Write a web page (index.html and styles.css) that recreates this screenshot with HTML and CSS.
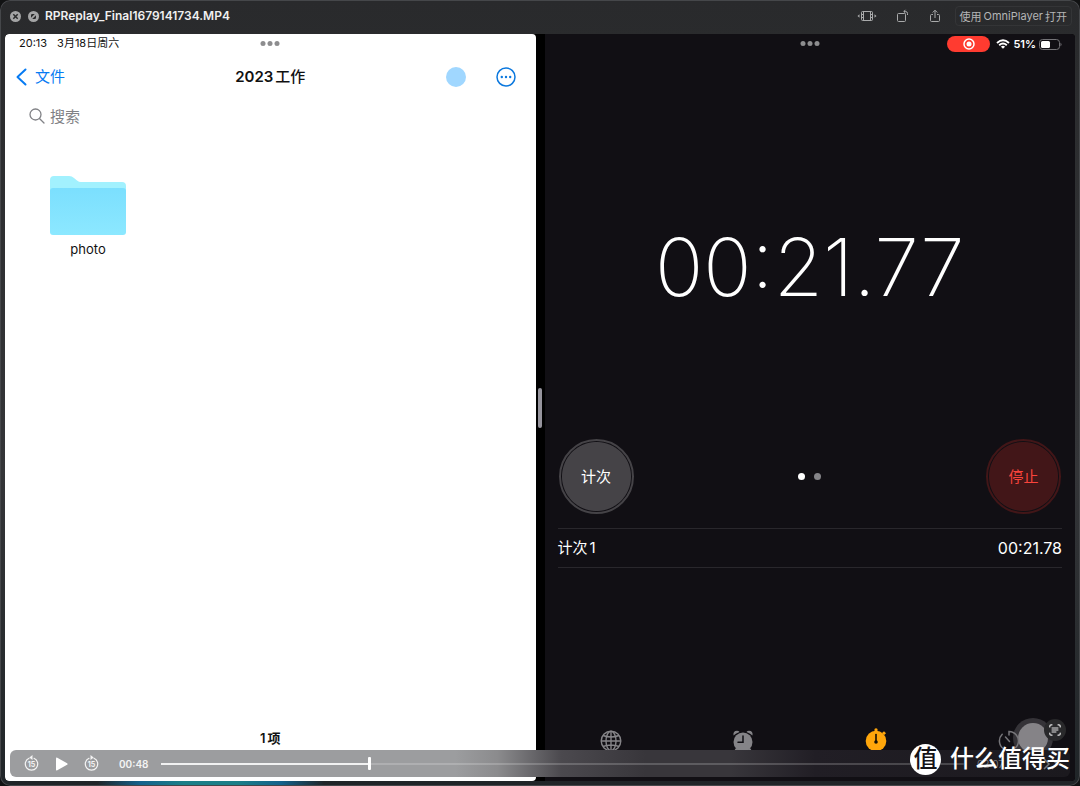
FILE: index.html
```html
<!DOCTYPE html>
<html lang="zh-CN">
<head>
<meta charset="utf-8">
<meta name="viewport" content="width=device-width, initial-scale=1">
<title>RPReplay_Final1679141734.MP4</title>
<link rel="stylesheet" href="styles.css">
</head>
<body>
<div class="window">
  <header class="titlebar">
    <button class="icon-button" aria-label="关闭">
      <svg width="11" height="11" viewBox="0 0 11 11"><circle cx="5.5" cy="5.5" r="5.5" fill="#a3a4a5"/><path d="M3.300 3.300l4.400 4.400M7.700 3.300L3.300 7.700" stroke="#292a2b" stroke-width="1.500"/></svg>
    </button>
    <button class="icon-button" aria-label="全屏">
      <svg width="11" height="11" viewBox="0 0 11 11"><circle cx="5.5" cy="5.5" r="5.5" fill="#a3a4a5"/><path d="M3 6.800V4.200Q3 3 4.200 3h2.600zM8 4.200v2.600Q8 8 6.800 8H4.200z" fill="#292a2b"/></svg>
    </button>
    <h1 class="file-name">RPReplay_Final1679141734.MP4</h1>
    <div class="title-actions">
      <button class="icon-button" aria-label="修剪">
        <svg width="20" height="12" viewBox="0 0 20 12" fill="none" stroke="#a9aaab"><rect x="4.500" y="1.500" width="11" height="9" rx="1"/><path d="M6.500 1.500v9M13.500 1.500v9"/><path d="M4.800 4.500h1.500M4.800 7.500h1.500M13.700 4.500h1.500M13.700 7.500h1.500"/><path d="M2.500 4.200v3.600L.5 6zM17.500 4.200v3.600l2-1.800z" fill="#a9aaab" stroke="none"/></svg>
      </button>
      <button class="icon-button" aria-label="旋转">
        <svg width="14" height="14" viewBox="0 0 14 14" fill="none" stroke="#a9aaab"><rect x="1.500" y="4.500" width="8" height="8" rx="1"/><path d="M8 2.500h1.500q2 0 2 2V6M9.500.8L7.800 2.500l1.700 1.700"/></svg>
      </button>
      <button class="icon-button" aria-label="共享">
        <svg width="12" height="14" viewBox="0 0 12 14" fill="none" stroke="#a9aaab"><path d="M4 5.500H2.500q-1 0-1 1v5q0 1 1 1h7q1 0 1-1v-5q0-1-1-1H8M6 9V1.500M3.700 3.500L6 1.200l2.300 2.300"/></svg>
      </button>
      <button class="open-button">使用<span>OmniPlayer</span>打开</button>
    </div>
  </header>

  <main class="screen">
    <section class="files">
      <div class="status-bar">
        <span>20:13</span><span>3月18日周六</span>
      </div>
      <button class="grab" aria-label="多任务"><i></i><i></i><i></i></button>
      <nav class="files-nav">
        <a class="back" href="#files">
          <svg width="11" height="18" viewBox="0 0 11 18" fill="none" stroke="#077bf3" stroke-width="2" stroke-linecap="round" stroke-linejoin="round"><path d="M9.500 1.500L1.500 9l8 7.500"/></svg><span>文件</span></a>
        <h2>2023<span>工作</span></h2>
        <div class="nav-tools">
          <span class="touch-dot"></span>
          <button class="icon-button" aria-label="更多">
            <svg width="20" height="20" viewBox="0 0 20 20"><circle cx="10" cy="10" r="9" fill="none" stroke="#0b78de" stroke-width="1.500"/><g fill="#0b78de"><circle cx="5.800" cy="10" r="1.200"/><circle cx="10" cy="10" r="1.200"/><circle cx="14.200" cy="10" r="1.200"/></g></svg>
          </button>
        </div>
      </nav>
      <label class="search">
        <svg width="16" height="16" viewBox="0 0 16 16" fill="none" stroke="#818286" stroke-width="1.300" stroke-linecap="round"><circle cx="6.500" cy="6.500" r="5.500"/><path d="M10.700 10.700l4.300 4.300"/></svg>
        <input type="search" placeholder="搜索" aria-label="搜索">
      </label>
      <div class="folder-grid">
        <a class="folder" href="#photo">
          <svg width="76" height="60" viewBox="0 0 76 60"><defs><linearGradient id="front" x1="0" y1="0" x2="0" y2="1"><stop offset="0" stop-color="#7bdffe"/><stop offset="1" stop-color="#8ce8ff"/></linearGradient></defs><path d="M0 4q0-4 4-4h15q3 0 5 2l3 2.500q2 1.500 4 1.500h41q4 0 4 4v14H0z" fill="#a2f1fe"/><path d="M0 15q0-3 3-3h70q3 0 3 3v41q0 3-3 3H3q-3 0-3-3z" fill="url(#front)"/></svg>
          <span>photo</span>
        </a>
      </div>
      <p class="item-count">1<span>项</span></p>
    </section>

    <div class="divider"><span class="divider-handle"></span></div>

    <section class="clock">
      <button class="grab" aria-label="多任务"><i></i><i></i><i></i></button>
      <div class="clock-status">
        <span class="record"><svg width="12" height="12" viewBox="0 0 12 12"><circle cx="6" cy="6" r="5" fill="none" stroke="#fff" stroke-width="1.500"/><circle cx="6" cy="6" r="2.500" fill="#fff"/></svg></span>
        <svg width="14" height="10" viewBox="0 0 14 10" fill="none" stroke="#fff" stroke-width="1.900"><path d="M1 4q6-5.600 12 0M3.200 6.300q3.800-3.500 7.600 0"/><path d="M7 9.800L4.900 7.700q2.100-1.700 4.200 0z" fill="#fff" stroke="none"/></svg>
        <span>51%</span>
        <svg width="23" height="11" viewBox="0 0 23 11"><rect x=".5" y=".5" width="20" height="10" rx="3" fill="none" stroke="#747377"/><rect x="2" y="2" width="9" height="7" rx="1.500" fill="#fff"/><path d="M21.500 3.500q2 2 0 4z" fill="#747377"/></svg>
      </div>
      <div class="time">00:21.77</div>
      <div class="controls">
        <button class="round lap">计次</button>
        <div class="pages"><i></i><i></i></div>
        <button class="round stop">停止</button>
      </div>
      <ul class="laps">
        <li><span>计次<span class="lap-number">1</span></span><span class="lap-time">00:21.78</span></li>
      </ul>
      <div class="assistive"><span></span></div>
      <nav class="tabs">
        <a href="#world" aria-label="世界时钟"><svg width="22" height="22" viewBox="0 0 22 22" fill="none" stroke="#858488" stroke-width="1.400"><circle cx="11" cy="11" r="9.800"/><ellipse cx="11" cy="11" rx="5" ry="9.800"/><path d="M11 1v20M1 11h20M3 5.500q8 3 16 0M3 16.500q8-3 16 0"/></svg></a>
        <a href="#alarm" aria-label="闹钟"><svg width="22" height="22" viewBox="0 0 22 22" fill="#858488"><circle cx="11" cy="12" r="9.500"/><path d="M1.500 5.500Q.8 1 5 .8q1.800 0 2.500 1.200Q4 3 1.500 5.500zM20.500 5.500q.7-4.500-3.500-4.700-1.800 0-2.500 1.200 3.500 1 6 3.500zM4 18l-2 3 1 1 4-2zM18 18l2 3-1 1-4-2z"/><path d="M11 6v6.300H6" fill="none" stroke="#110f14" stroke-width="1.500" stroke-linecap="round"/></svg></a>
        <a href="#stopwatch" aria-label="秒表"><svg width="22" height="24" viewBox="0 0 22 24"><g fill="#ffa60b"><circle cx="11" cy="13" r="10.300"/><path d="M9.500 1q1.500-1.500 3 0v3h-3zM17 5l2-1.700 2 2L19.200 7z"/></g><path d="M11 6.500V14" stroke="#171005" stroke-width="1.600" stroke-linecap="round"/><circle cx="11" cy="14" r="1.800" fill="#171005"/></svg></a>
        <a href="#timer" aria-label="计时器"><svg width="22" height="22" viewBox="0 0 22 22" fill="none" stroke="#77767a" stroke-width="1.500" stroke-linecap="round"><path d="M11 5V1.500a9.500 9.500 0 1 1-6.800 2.800M7.500 7l4 4.500"/></svg></a>
      </nav>
      <button class="scan" aria-label="识别文本"><svg width="12" height="12" viewBox="0 0 12 12" fill="none" stroke="#e5e5e6" stroke-width="1.200" stroke-linecap="round"><path d="M.8 3V2q0-1.200 1.200-1.200h1M9 .8h1q1.200 0 1.200 1.200v1M11.200 9v1q0 1.200-1.200 1.200H9M3 11.200H2Q.8 11.200.8 10V9"/><path d="M3 4h6M3 6h6M3 8h4" stroke-width="1"/></svg></button>
    </section>

    <div class="player">
      <button class="icon-button" aria-label="后退15秒"><svg width="15" height="17" viewBox="0 0 15 17"><path d="M5 3.300a6.200 6.200 0 1 0 5 0" fill="none" stroke="#f4f4f4" stroke-width="1.200" stroke-linecap="round"/><path d="M8.500 0v5L5.300 2.500z" fill="#f4f4f4"/><text x="7.500" y="11.500" class="skip">15</text></svg></button>
      <button class="icon-button" aria-label="播放"><svg width="13" height="14" viewBox="0 0 13 14"><path d="M1 1.500Q1 0 2.300.7l9.800 5.500q1 .8 0 1.600l-9.800 5.500Q1 14 1 12.500z" fill="#fff"/></svg></button>
      <button class="icon-button" aria-label="前进15秒"><svg width="15" height="17" viewBox="0 0 15 17"><path d="M5 3.300a6.200 6.200 0 1 0 5 0" fill="none" stroke="#f4f4f4" stroke-width="1.200" stroke-linecap="round"/><path d="M6.500 0v5l3.200-2.500z" fill="#f4f4f4"/><text x="7.500" y="11.500" class="skip">15</text></svg></button>
      <span class="elapsed">00:48</span>
      <input class="seek" type="range" min="0" max="186" value="48" aria-label="播放进度">
      <span class="remaining">02:07</span>
      <button class="icon-button more" aria-label="更多选项"><svg width="18" height="12" viewBox="0 0 18 12" fill="none" stroke="#77767a" stroke-width="1.500"><path d="M2 1l5 5-5 5M10 1l5 5-5 5"/></svg></button>
    </div>

    <div class="watermark"><span class="seal">值</span><span>什么值得买</span></div>
  </main>
</div>
</body>
</html>
```

FILE: styles.css
```css
* { box-sizing: border-box; }

body {
  margin: 0;
  background: #111213;
  font-family: Inter, "Noto Sans CJK SC", sans-serif;
}

h1, h2, p, ul { margin: 0; padding: 0; }

button {
  padding: 0;
  border: 0;
  background: none;
  color: inherit;
  font: inherit;
}

a { color: inherit; text-decoration: none; }

svg { display: block; }

i { display: block; border-radius: 50%; }

.window {
  display: flex;
  flex-direction: column;
  min-height: 100vh;
  padding: 0 5px 5px;
  border-radius: 10px;
  background:
    linear-gradient(90deg, transparent 9%, #14628c 13%, #1b7f88 17%, #1b7f88 22%, #14628c 26%, transparent 30%) bottom / 100% 5px no-repeat,
    linear-gradient(#292a2c, #343538 60%, #202528);
  box-shadow: inset 0 0 0 1px #45474a;
}

.titlebar {
  display: flex;
  align-items: center;
  gap: 7px;
  height: 34px;
  padding: 0 3px 2px 5px;
}

.file-name {
  margin-left: -1px;
  color: #f0f0f0;
  font-size: 12px;
  font-weight: 600;
  line-height: 16px;
}

.title-actions {
  display: flex;
  align-items: center;
  gap: 19px;
  margin-left: auto;
}

.open-button {
  display: flex;
  align-items: center;
  gap: 2px;
  height: 20px;
  margin-left: -5px;
  padding: 0 4px;
  border: 1px solid #343537;
  border-radius: 4px;
  color: #b4b5b6;
  font-size: 11px;
}

.screen {
  position: relative;
  display: grid;
  grid-template-columns: 1fr 9px 1fr;
  flex: 1;
  overflow: hidden;
  border-radius: 4px;
  background: #000;
}

.files {
  position: relative;
  display: flex;
  flex-direction: column;
  border-radius: 4px;
  background: #fff;
  color: #111;
}

.status-bar {
  display: flex;
  gap: 10px;
  height: 20px;
  padding-left: 14px;
  font-size: 11px;
  line-height: 19px;
}

.grab {
  position: absolute;
  top: 7px;
  left: 50%;
  display: flex;
  gap: 2px;
  transform: translateX(-50%);
}

.grab i { width: 5px; height: 5px; background: #8d8d8f; }

.files-nav {
  display: grid;
  grid-template-columns: 1fr auto 1fr;
  align-items: center;
  height: 46px;
  padding: 0 11px;
}

.back {
  display: flex;
  align-items: center;
  gap: 8px;
  color: #077bf3;
  font-size: 15px;
  line-height: 20px;
}

.files-nav h2 {
  display: flex;
  align-items: baseline;
  gap: 2px;
  font-size: 15px;
  font-weight: 600;
  line-height: 20px;
}

.files-nav h2 span { font-weight: 500; }

.nav-tools {
  display: flex;
  align-items: center;
  justify-content: flex-end;
  gap: 30px;
  padding-right: 9px;
}

.touch-dot {
  width: 20px;
  height: 20px;
  border-radius: 50%;
  background: #a0d7ff;
}

.search {
  display: flex;
  align-items: center;
  gap: 5px;
  height: 32px;
  padding-left: 24px;
}

.search input {
  flex: 1;
  min-width: 0;
  padding: 0;
  border: 0;
  outline: 0;
  background: none;
  font: 15px Inter, "Noto Sans CJK SC", sans-serif;
}

.search input::placeholder { color: #818286; }

.folder-grid { display: flex; flex: 1; align-items: flex-start; padding: 44px 45px; }

.folder {
  display: flex;
  flex-direction: column;
  align-items: center;
  gap: 4px;
  font-size: 13px;
  line-height: 18px;
}

.item-count {
  display: flex;
  justify-content: center;
  gap: 2px;
  padding-bottom: 33px;
  font-size: 13px;
  font-weight: 600;
  line-height: 20px;
}

.divider { display: grid; place-items: center; }

.divider-handle {
  width: 4px;
  height: 40px;
  border-radius: 2px;
  background: #96949d;
}

.clock {
  position: relative;
  display: flex;
  flex-direction: column;
  padding: 0 13px;
  background: #110f14;
  color: #fff;
}

.clock-status {
  display: flex;
  align-items: center;
  justify-content: flex-end;
  gap: 3px;
  height: 20px;
  font-size: 11px;
  font-weight: 600;
}

.record {
  display: grid;
  place-items: center;
  width: 43px;
  height: 16px;
  margin-right: 3px;
  border-radius: 8px;
  background: #ff3b30;
}

.time {
  display: grid;
  flex: 1;
  place-items: center;
  padding-top: 41px;
  font-size: 80px;
  font-weight: 200;
  line-height: 96px;
}

.controls {
  display: flex;
  align-items: center;
  justify-content: space-between;
  padding: 0 1px 14px;
}

.round {
  width: 75px;
  height: 75px;
  padding-bottom: 2px;
  border: 2px solid #454347;
  border-radius: 50%;
  font-size: 15px;
}

.lap { background: radial-gradient(circle, #454347 34px, #110f14 35px); }

.stop {
  border-color: #421618;
  background: radial-gradient(circle, #421618 34px, #110f14 35px);
  color: #fa443c;
}

.pages { display: flex; gap: 9px; }

.pages i { width: 7px; height: 7px; background: #fff; }

.pages i + i { background: #858488; }

.laps {
  border-top: 1px solid #29272c;
  list-style: none;
}

.laps li {
  display: flex;
  justify-content: space-between;
  border-bottom: 1px solid #29272c;
  font-size: 15px;
  line-height: 38px;
}

.lap-number { margin-left: 2px; }

.lap-time { font-size: 16px; }

.tabs {
  position: relative;
  display: grid;
  grid-template-columns: repeat(4, 1fr);
  align-items: end;
  justify-items: center;
  margin: 160px -13px 29px;
}

.assistive {
  position: absolute;
  right: 22px;
  bottom: 23px;
  display: grid;
  place-items: center;
  width: 40px;
  height: 40px;
  border-radius: 50%;
  background: #353338;
}

.assistive span {
  width: 30px;
  height: 30px;
  border-radius: 50%;
  background: #858387;
}

.scan {
  position: absolute;
  right: 9px;
  bottom: 40px;
  display: grid;
  place-items: center;
  width: 22px;
  height: 22px;
  border-radius: 50%;
  background: #29292b;
}

.player {
  position: absolute;
  right: 5px;
  bottom: 4px;
  left: 5px;
  display: flex;
  align-items: center;
  height: 27px;
  padding: 0 10px 0 14px;
  border-radius: 6px;
  background: linear-gradient(90deg, #9c9d9f 42%, #8b8b8d 46%, #4b494e 52%, #38363b 60%, #38363b 68%, #211e25 76%, #1b191e);
  color: #f4f4f4;
  font-size: 10px;
  font-weight: 600;
}

.player .icon-button + .icon-button { margin-left: 16px; }

.skip {
  fill: #f4f4f4;
  font-size: 7px;
  font-weight: 700;
  text-anchor: middle;
}

.elapsed { margin: 0 13px 0 20px; }

.seek {
  flex: 1;
  min-width: 0;
  height: 14px;
  margin: 0;
  appearance: none;
  background: linear-gradient(90deg, #f1f1f1 26%, #ffffff30 26%) center / 100% 2px no-repeat;
}

.seek::-webkit-slider-thumb {
  appearance: none;
  width: 3px;
  height: 13px;
  border-radius: 1px;
  background: #fff;
}

.remaining { margin-left: 13px; color: #77767a; font-weight: 400; }

.player .more { margin-left: 38px; }

.watermark {
  position: absolute;
  right: 5px;
  bottom: 5px;
  display: flex;
  align-items: center;
  gap: 9px;
  color: #fff;
  font-size: 24px;
  font-weight: 500;
  line-height: 34px;
}

.seal {
  display: grid;
  place-items: center;
  width: 31px;
  height: 31px;
  border-radius: 50%;
  background: #fff;
  color: #151317;
  line-height: 28px;
}
```
